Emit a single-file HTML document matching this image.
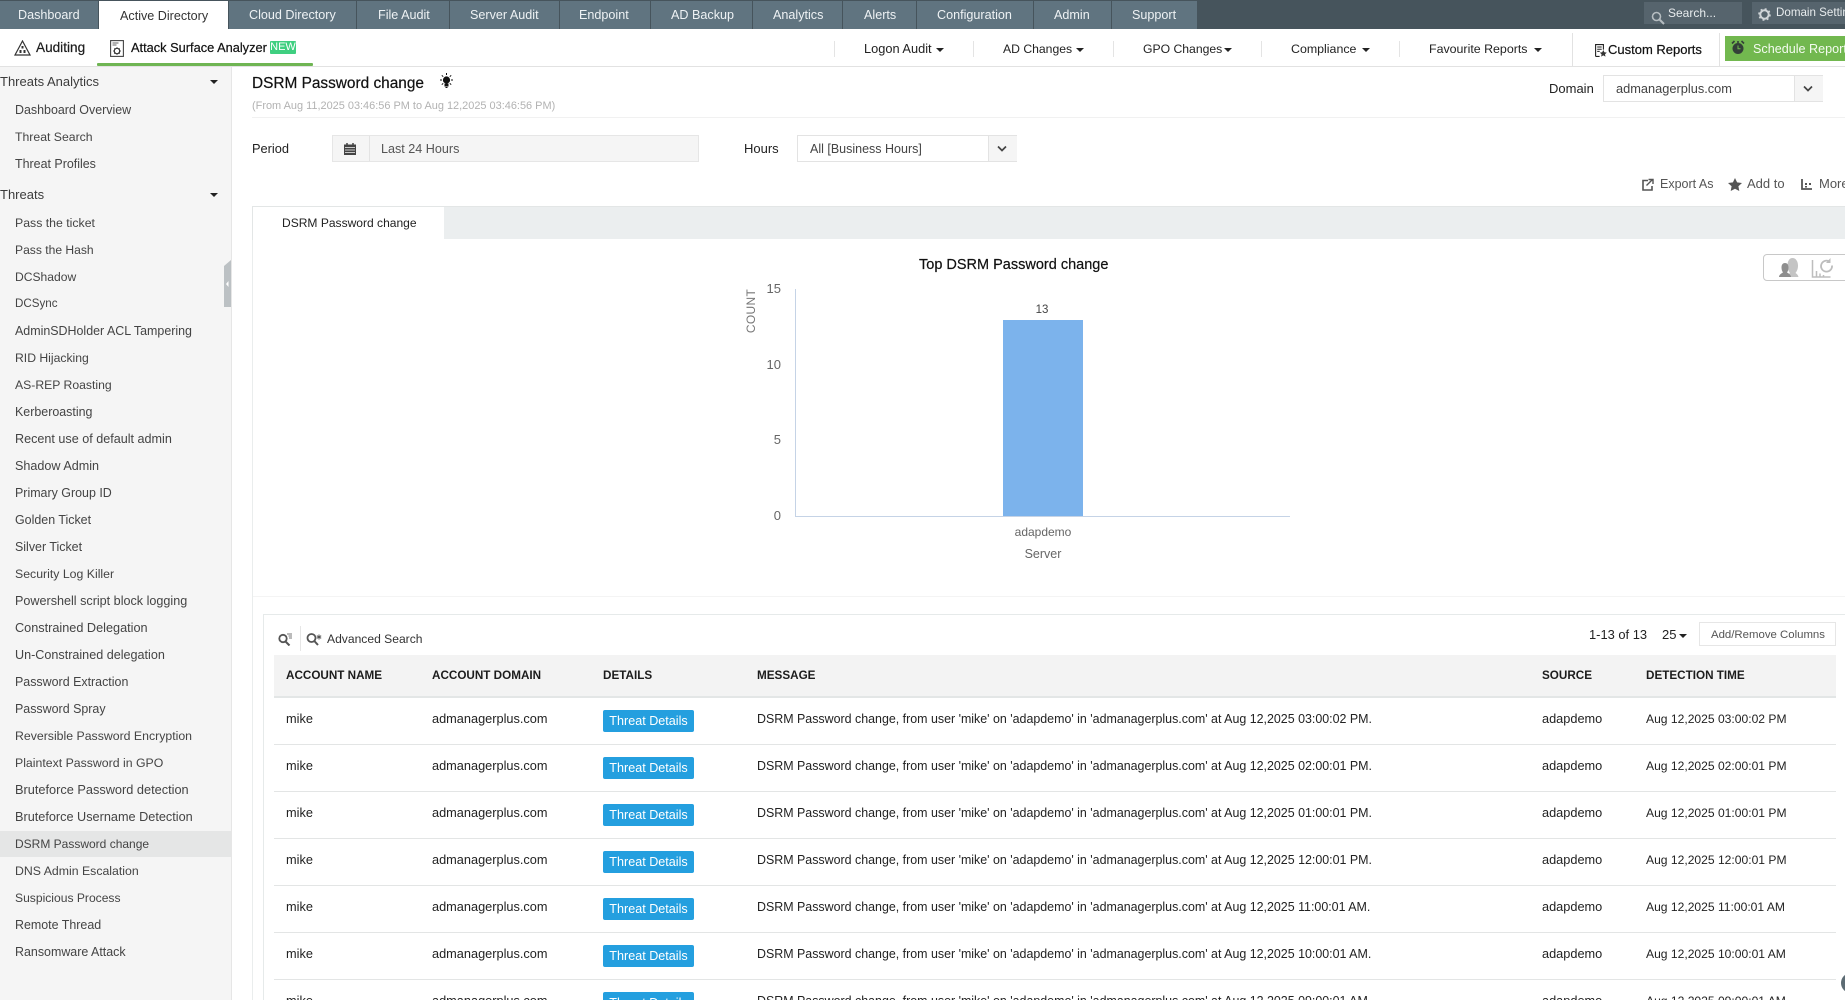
<!DOCTYPE html>
<html lang="en"><head><meta charset="utf-8"><title>DSRM Password change</title>
<style>
html{margin:0;padding:0;background:#fff;width:1845px;height:1000px;overflow:hidden}
body{margin:0;padding:0;background:#fff;width:1845px;height:1000px;overflow:hidden;position:relative;font-family:"Liberation Sans",sans-serif;font-size:12.5px;color:#333}
.a{position:absolute}
.t{position:absolute;white-space:nowrap;line-height:16px}
.tab{position:absolute;top:1px;height:28px;background:#607480;color:#eef2f4;line-height:29px;white-space:nowrap;font-size:12.6px;border-right:1px solid #46545c;box-sizing:content-box}
.sep{position:absolute;top:41px;height:16px;width:1px;background:#e4e4e4}
.arr{position:absolute;width:0;height:0;border-left:4px solid transparent;border-right:4px solid transparent;border-top:4px solid #222}
.si{position:absolute;left:15px;white-space:nowrap;line-height:16px;color:#444;font-size:12.45px}
.sh{position:absolute;left:0;white-space:nowrap;line-height:16px;color:#3c3c3c;font-size:13px}
.r{position:absolute;left:274px;width:1562px;height:47px;border-bottom:1px solid #e3e5e5;box-sizing:border-box}
.r span{position:absolute;top:13px;line-height:16px;white-space:nowrap;color:#222;font-size:12.75px}
.r span.m{font-size:12.43px}
.r span.d{font-size:12.1px}
.r b{position:absolute;left:329px;top:12px;width:91px;height:22px;background:#249fdf;border-radius:2px;color:#fff;font-weight:normal;font-size:12.6px;line-height:23px;text-align:center;white-space:nowrap}
.h{position:absolute;top:668px;line-height:16px;white-space:nowrap;color:#1c1c1c;font-size:11.7px;font-weight:bold}
</style></head>
<body>
<!-- top bar -->
<div class="a" style="left:0;top:0;width:1845px;height:29px;background:#46545c"></div>
<div class="tab" style="left:0;width:98px"><span class="a" style="left:18px;top:0">Dashboard</span></div>
<div class="a" style="left:99px;top:1px;width:129px;height:29px;background:#fff"><span class="t" style="left:21px;top:7px;color:#333;font-size:12.6px">Active Directory</span></div>
<div class="tab" style="left:229px;width:127px"><span class="a" style="left:20px;top:0">Cloud Directory</span></div>
<div class="tab" style="left:357px;width:92px"><span class="a" style="left:21px;top:0">File Audit</span></div>
<div class="tab" style="left:450px;width:109px"><span class="a" style="left:20px;top:0">Server Audit</span></div>
<div class="tab" style="left:560px;width:90px"><span class="a" style="left:19px;top:0">Endpoint</span></div>
<div class="tab" style="left:651px;width:101px"><span class="a" style="left:20px;top:0">AD Backup</span></div>
<div class="tab" style="left:753px;width:89px"><span class="a" style="left:20px;top:0">Analytics</span></div>
<div class="tab" style="left:843px;width:73px"><span class="a" style="left:21px;top:0">Alerts</span></div>
<div class="tab" style="left:917px;width:116px"><span class="a" style="left:20px;top:0">Configuration</span></div>
<div class="tab" style="left:1034px;width:77px"><span class="a" style="left:20px;top:0">Admin</span></div>
<div class="tab" style="left:1112px;width:85px;border-right:0"><span class="a" style="left:20px;top:0">Support</span></div>

<div class="a" style="left:1644px;top:2px;width:98px;height:22px;background:#56646d"></div>
<svg class="a" style="left:1651px;top:11px" width="14" height="14" viewBox="0 0 14 14"><circle cx="5.5" cy="5.5" r="4" fill="none" stroke="#b5bcc0" stroke-width="1.6"/><path d="M8.5 8.5L13 13" stroke="#b5bcc0" stroke-width="2"/></svg>
<span class="t" style="left:1668px;top:5px;color:#e8ecee;font-size:12px">Search...</span>
<div class="a" style="left:1752px;top:2px;width:93px;height:22px;background:#56646d"></div>
<svg class="a" style="left:1758px;top:8px" width="13" height="13" viewBox="0 0 13 13"><circle cx="6.5" cy="6.5" r="4.2" fill="none" stroke="#d0d5d8" stroke-width="2"/><circle cx="6.5" cy="6.5" r="5.6" fill="none" stroke="#d0d5d8" stroke-width="1.4" stroke-dasharray="2 2.4"/></svg>
<span class="t" style="left:1776px;top:5px;color:#e8ecee;font-size:11.6px">Domain Settings</span>

<!-- second row -->
<div class="a" style="left:0;top:66px;width:1845px;height:1px;background:#e2e2e2"></div>
<svg class="a" style="left:14px;top:40px" width="17" height="16" viewBox="0 0 17 16"><path d="M8.5 1L16 15H1Z" fill="none" stroke="#333" stroke-width="1.2"/><path d="M7.5 6h2v2.500h-2zM5.500 10h2v3h-2zM9.500 10h2v3h-2z" fill="#333"/></svg>
<span class="t" style="left:36px;top:40px;color:#1c1c1c;font-size:13.6px;-webkit-text-stroke:.2px #1c1c1c">Auditing</span>
<svg class="a" style="left:110px;top:40px" width="14" height="17" viewBox="0 0 14 17"><rect x=".6" y=".6" width="12.8" height="15.8" fill="none" stroke="#444" stroke-width="1.1"/><path d="M2.500 3h6M2.500 5h4" stroke="#666" stroke-width="1"/><circle cx="7" cy="11" r="2.700" fill="none" stroke="#333" stroke-width="1.2"/><path d="M7 7.200v1M7 13.800v1M3.200 11h1M9.800 11h1M4.400 8.400l.7.7M9 13l.7.7M9.600 8.400l-.7.7M5 13l-.7.7" stroke="#333"/></svg>
<span class="t" style="left:131px;top:40px;color:#111;font-size:12.8px;-webkit-text-stroke:.2px #111">Attack Surface Analyzer</span>
<span class="t" style="left:270px;top:41px;width:26px;height:13px;background:#3fcf80;color:#fff;font-size:11px;line-height:13px;text-align:center;border-radius:1px">NEW</span>
<div class="a" style="left:97px;top:63px;width:216px;height:3px;background:#6fb553;border-radius:1px"></div>

<div class="sep" style="left:834px"></div>
<span class="t" style="left:864px;top:41px;font-size:12.8px;color:#222">Logon Audit</span><div class="arr" style="left:936px;top:48px"></div>
<div class="sep" style="left:973px"></div>
<span class="t" style="left:1003px;top:41px;font-size:12.2px;color:#222">AD Changes</span><div class="arr" style="left:1076px;top:48px"></div>
<div class="sep" style="left:1113px"></div>
<span class="t" style="left:1143px;top:41px;font-size:12.2px;color:#222">GPO Changes</span><div class="arr" style="left:1224px;top:48px"></div>
<div class="sep" style="left:1261px"></div>
<span class="t" style="left:1291px;top:41px;font-size:12.4px;color:#222">Compliance</span><div class="arr" style="left:1362px;top:48px"></div>
<div class="sep" style="left:1399px"></div>
<span class="t" style="left:1429px;top:41px;font-size:12.4px;color:#222">Favourite Reports</span><div class="arr" style="left:1534px;top:48px"></div>
<div class="a" style="left:1572px;top:33px;width:1px;height:33px;background:#e2e2e2"></div>
<svg class="a" style="left:1595px;top:44px" width="12" height="13" viewBox="0 0 12 13"><path d="M.6 12.400V.6h7.800v5M.6 12.400h4" fill="none" stroke="#222" stroke-width="1.1"/><path d="M2.200 3h4.500M2.200 5.200h4.500M2.200 7.400h2.500" stroke="#222"/><path d="M8.300 6l1.100 2.300 2.400.3-1.800 1.600.5 2.400-2.200-1.200-2.200 1.200.5-2.400-1.800-1.600 2.400-.3z" fill="#333"/></svg>
<span class="t" style="left:1608px;top:42px;color:#111;font-size:13px;-webkit-text-stroke:.2px #111">Custom Reports</span>
<div class="a" style="left:1719px;top:33px;width:1px;height:33px;background:#e2e2e2"></div>
<div class="a" style="left:1725px;top:36px;width:120px;height:25px;background:#72b84f"></div>
<svg class="a" style="left:1731px;top:40px" width="14" height="15" viewBox="0 0 14 15"><circle cx="7" cy="8.500" r="5.500" fill="#333f38"/><path d="M7 5.500v3.200h2.500" stroke="#72b84f" stroke-width="1" fill="none"/><path d="M1 3.500L3.500 1M13 3.500L10.500 1M7 1v2" stroke="#333f38" stroke-width="1.6"/></svg>
<span class="t" style="left:1753px;top:40.5px;color:#f4fbf0;font-size:12.6px">Schedule Reports</span>

<!-- sidebar -->
<div class="a" style="left:0;top:67px;width:231px;height:933px;background:#f5f5f5;border-right:1px solid #e6e6e6"></div>
<span class="sh" style="top:74px">Threats Analytics</span><div class="arr" style="left:210px;top:80px;border-left-width:4.5px;border-right-width:4.5px"></div>
<span class="si" style="top:102px">Dashboard Overview</span>
<span class="si" style="top:129px;font-size:12.25px">Threat Search</span>
<span class="si" style="top:156px">Threat Profiles</span>
<span class="sh" style="top:187px">Threats</span><div class="arr" style="left:210px;top:193px;border-left-width:4.5px;border-right-width:4.5px"></div>
<span class="si" style="top:215px;font-size:12.3px">Pass the ticket</span>
<span class="si" style="top:242px;font-size:12.1px">Pass the Hash</span>
<span class="si" style="top:269px;font-size:12.1px">DCShadow</span>
<span class="si" style="top:296px;font-size:11.6px">DCSync</span>
<span class="si" style="top:323px">AdminSDHolder ACL Tampering</span>
<span class="si" style="top:350px;font-size:12.2px">RID Hijacking</span>
<span class="si" style="top:377px;font-size:12.2px">AS-REP Roasting</span>
<span class="si" style="top:404px">Kerberoasting</span>
<span class="si" style="top:431px;font-size:12.6px">Recent use of default admin</span>
<span class="si" style="top:458px;font-size:12.6px">Shadow Admin</span>
<span class="si" style="top:485px">Primary Group ID</span>
<span class="si" style="top:512px">Golden Ticket</span>
<span class="si" style="top:539px">Silver Ticket</span>
<span class="si" style="top:566px;font-size:12.3px">Security Log Killer</span>
<span class="si" style="top:593px;font-size:12.6px">Powershell script block logging</span>
<span class="si" style="top:620px;font-size:12.7px">Constrained Delegation</span>
<span class="si" style="top:647px;font-size:12.6px">Un-Constrained delegation</span>
<span class="si" style="top:674px">Password Extraction</span>
<span class="si" style="top:701px">Password Spray</span>
<span class="si" style="top:728px;font-size:12.3px">Reversible Password Encryption</span>
<span class="si" style="top:755px;font-size:12.3px">Plaintext Password in GPO</span>
<span class="si" style="top:782px;font-size:12.75px">Bruteforce Password detection</span>
<span class="si" style="top:809px;font-size:12.7px">Bruteforce Username Detection</span>
<div class="a" style="left:0;top:831px;width:231px;height:26px;background:#e5e6e6"></div>
<span class="si" style="top:836px;font-size:12px">DSRM Password change</span>
<span class="si" style="top:863px;font-size:12.3px">DNS Admin Escalation</span>
<span class="si" style="top:890px;font-size:12.1px">Suspicious Process</span>
<span class="si" style="top:917px">Remote Thread</span>
<span class="si" style="top:944px">Ransomware Attack</span>
<svg class="a" style="left:224px;top:260px" width="7" height="47" viewBox="0 0 7 47"><path d="M0 6L7 0V47H0Z" fill="#bcc1c4"/><path d="M4.500 21l-2.500 3 2.500 3z" fill="#fff"/></svg>

<!-- heading -->
<span class="t" style="left:252px;top:76px;font-size:15.4px;color:#111;-webkit-text-stroke:.2px #111">DSRM Password change</span>
<svg class="a" style="left:439px;top:73px" width="15" height="16" viewBox="0 0 15 16"><circle cx="7.500" cy="7" r="3.600" fill="#111"/><path d="M6 11h3v2H6zM7.500 0v2M1 7H3M12 7h2M2.800 2.300l1.400 1.400M12.200 2.300l-1.400 1.400M2.800 11.700l1.400-1.400M12.200 11.700l-1.400-1.400M6.500 14.500h2" stroke="#111" fill="#111"/></svg>
<span class="t" style="left:252px;top:97.500px;font-size:10.95px;color:#b2b2b2">(From Aug 11,2025 03:46:56 PM to Aug 12,2025 03:46:56 PM)</span>
<div class="a" style="left:252px;top:117px;width:1593px;height:1px;background:#f1f1f1"></div>

<span class="t" style="left:1549px;top:81px;color:#222;font-size:13px">Domain</span>
<div class="a" style="left:1603px;top:75px;width:220px;height:27px;border:1px solid #e3e3e3;box-sizing:border-box"></div>
<div class="a" style="left:1794px;top:76px;width:28px;height:25px;background:#f5f5f5;border-left:1px solid #e3e3e3"></div>
<span class="t" style="left:1616px;top:81px;color:#444;font-size:12.8px">admanagerplus.com</span>
<svg class="a" style="left:1802px;top:85px" width="12" height="8" viewBox="0 0 12 8"><path d="M2 1.500l4 4 4-4" fill="none" stroke="#444" stroke-width="1.7"/></svg>

<span class="t" style="left:252px;top:141px;color:#222;font-size:12.8px">Period</span>
<div class="a" style="left:332px;top:135px;width:367px;height:27px;background:#f5f5f5;border:1px solid #e6e6e6;box-sizing:border-box"></div>
<div class="a" style="left:369px;top:136px;width:1px;height:25px;background:#e3e3e3"></div>
<svg class="a" style="left:344px;top:143px" width="12" height="12" viewBox="0 0 12 12"><rect y="1.500" width="12" height="10.500" fill="#444"/><path d="M3 0v2M9 0v2" stroke="#444" stroke-width="1.5"/><path d="M1 4.500h10M1 7h10M1 9.500h10" stroke="#f5f5f5" stroke-width=".7"/></svg>
<span class="t" style="left:381px;top:141px;color:#555;font-size:12.6px">Last 24 Hours</span>
<span class="t" style="left:744px;top:141px;color:#222;font-size:13px">Hours</span>
<div class="a" style="left:797px;top:135px;width:220px;height:27px;border:1px solid #e3e3e3;box-sizing:border-box"></div>
<div class="a" style="left:988px;top:136px;width:28px;height:25px;background:#f5f5f5;border-left:1px solid #e3e3e3"></div>
<span class="t" style="left:810px;top:141px;color:#444;font-size:12.5px">All [Business Hours]</span>
<svg class="a" style="left:996px;top:145px" width="12" height="8" viewBox="0 0 12 8"><path d="M2 1.500l4 4 4-4" fill="none" stroke="#444" stroke-width="1.7"/></svg>

<svg class="a" style="left:1642px;top:178px" width="12" height="13" viewBox="0 0 12 13"><path d="M6 2.500H1v9.500h9V8" fill="none" stroke="#555" stroke-width="1.6"/><path d="M4.500 7.500L10 2M6.500 1.500h4.500v4.500" fill="none" stroke="#555" stroke-width="1.4"/></svg>
<span class="t" style="left:1660px;top:176px;color:#555;font-size:12.5px">Export As</span>
<svg class="a" style="left:1728px;top:178px" width="14" height="13" viewBox="0 0 14 13"><path d="M7 0l2.100 4.400 4.900.6-3.600 3.300.9 4.700L7 10.700 2.700 13l.9-4.700L0 5l4.900-.6z" fill="#555"/></svg>
<span class="t" style="left:1747px;top:176px;color:#555;font-size:13px">Add to</span>
<svg class="a" style="left:1801px;top:178px" width="12" height="12" viewBox="0 0 12 12"><path d="M1 1v10h10" fill="none" stroke="#555" stroke-width="1.800"/><path d="M4 5h2v2H4zM8 5h2v2H8zM4 8h2v1.500H4z" fill="#555"/></svg>
<span class="t" style="left:1819px;top:176px;color:#555;font-size:13px">More</span>

<!-- tabs strip -->
<div class="a" style="left:252px;top:206px;width:1593px;height:33px;background:#ebeeef;border-top:1px solid #e3e6e6;box-sizing:border-box"></div>
<div class="a" style="left:252px;top:206px;width:192px;height:34px;background:#fff;border-top:1px solid #e3e6e6;border-left:1px solid #e3e6e6;box-sizing:border-box"></div>
<span class="t" style="left:282px;top:215px;color:#222;font-size:12.05px">DSRM Password change</span>
<div class="a" style="left:252px;top:240px;width:1px;height:760px;background:#eaeded"></div>

<!-- chart -->
<span class="t" style="left:919px;top:256.500px;font-size:14.5px;color:#111;-webkit-text-stroke:.2px #111">Top DSRM Password change</span>
<div class="a" style="left:795px;top:289px;width:1px;height:227px;background:#c5d3e6"></div>
<div class="a" style="left:795px;top:516px;width:495px;height:1px;background:#c5d3e6"></div>
<div class="a" style="left:1003px;top:320px;width:80px;height:196px;background:#7cb3ec"></div>
<span class="t" style="left:740px;width:41px;top:281px;text-align:right;color:#666;font-size:13px">15</span>
<span class="t" style="left:740px;width:41px;top:357px;text-align:right;color:#666;font-size:13px">10</span>
<span class="t" style="left:740px;width:41px;top:432px;text-align:right;color:#666;font-size:13px">5</span>
<span class="t" style="left:740px;width:41px;top:508px;text-align:right;color:#666;font-size:13px">0</span>
<span class="t" style="left:727px;top:303px;width:48px;text-align:center;transform:rotate(-90deg);font-size:12px;color:#777;letter-spacing:.3px">COUNT</span>
<span class="t" style="left:1002px;top:302px;width:80px;text-align:center;font-size:11.5px;color:#444">13</span>
<span class="t" style="left:1003px;top:524px;width:80px;text-align:center;font-size:12px;color:#666">adapdemo</span>
<span class="t" style="left:1003px;top:546px;width:80px;text-align:center;font-size:12.5px;color:#666">Server</span>
<div class="a" style="left:1763px;top:254px;width:90px;height:27px;border:1px solid #c8c8c8;border-radius:4px;box-sizing:border-box"></div>
<svg class="a" style="left:1778px;top:256px" width="58" height="24" viewBox="0 0 58 24"><path d="M8 21c1-2 3-3 4-4-1.500-2-2.500-4-2.500-7.500C9.500 5 11.500 2 14.500 2s5.500 3 5.500 7.500c0 3.500-1 5.500-2.500 7.500 1.500 1 2.500 2 3 4z" fill="#c4c4c4"/><path d="M1 21c0-2 2-3.500 4-4.500-1-1.500-1.500-3-1.500-5C3.500 8.500 5 7 7 7s3.500 1.500 3.500 4.500c0 2-.5 3.500-1.500 5 2 1 4 2.500 4 4.500z" fill="#8e8e8e"/><path d="M34.500 4v17h18M38.500 21v-6M42 21v-3.500M45.500 21v-2" fill="none" stroke="#bdbdbd" stroke-width="1.5"/><path d="M54 9.500a5.500 5.500 0 1 1-2.500-4" fill="none" stroke="#bdbdbd" stroke-width="1.8"/><path d="M52.500 2v5H48z" fill="#bdbdbd"/></svg>
<div class="a" style="left:253px;top:596px;width:1592px;height:1px;background:#f4f4f4"></div>

<!-- table block -->
<div class="a" style="left:263px;top:614px;width:1582px;height:1px;background:#e6eaea"></div>
<div class="a" style="left:263px;top:614px;width:1px;height:386px;background:#e6eaea"></div>
<svg class="a" style="left:278px;top:633px" width="14" height="13" viewBox="0 0 14 13"><circle cx="5" cy="5.500" r="3.700" fill="none" stroke="#555" stroke-width="1.8"/><path d="M7.500 8.500L11.500 12.500" stroke="#555" stroke-width="2"/><path d="M9 1h5M10.500 3h3.500M11 5h3" stroke="#777"/></svg>
<div class="a" style="left:300px;top:626px;width:1px;height:25px;background:#e6e6e6"></div>
<svg class="a" style="left:306px;top:632px" width="16" height="14" viewBox="0 0 16 14"><circle cx="5.500" cy="6" r="4" fill="none" stroke="#555" stroke-width="1.8"/><path d="M8.300 9L12 13" stroke="#555" stroke-width="2"/><path d="M13 2.500v5M10.800 3.700l4.400 2.600M15.200 3.700l-4.400 2.600" stroke="#555"/></svg>
<span class="t" style="left:327px;top:631px;color:#333;font-size:12.1px">Advanced Search</span>
<span class="t" style="left:1589px;top:627px;color:#222;font-size:12.9px">1-13 of 13</span>
<span class="t" style="left:1662px;top:627px;color:#222;font-size:13px">25</span><div class="arr" style="left:1679px;top:634px"></div>
<div class="a" style="left:1699px;top:622px;width:137px;height:24px;border:1.5px solid #e6e6e6;box-sizing:border-box"></div>
<span class="t" style="left:1711px;top:627px;font-size:11.4px;color:#555">Add/Remove Columns</span>

<div class="a" style="left:274px;top:655px;width:1562px;height:43px;background:#f3f3f3;border-bottom:2px solid #e3e6e6;box-sizing:border-box"></div>
<span class="h" style="left:286px">ACCOUNT NAME</span>
<span class="h" style="left:432px">ACCOUNT DOMAIN</span>
<span class="h" style="left:603px">DETAILS</span>
<span class="h" style="left:757px">MESSAGE</span>
<span class="h" style="left:1542px">SOURCE</span>
<span class="h" style="left:1646px">DETECTION TIME</span>

<div class="r" style="top:698px"><span style="left:12px">mike</span><span style="left:158px">admanagerplus.com</span><b>Threat Details</b><span class="m" style="left:483px">DSRM Password change, from user 'mike' on 'adapdemo' in 'admanagerplus.com' at Aug 12,2025 03:00:02 PM.</span><span style="left:1268px">adapdemo</span><span class="d" style="left:1372px">Aug 12,2025 03:00:02 PM</span></div>
<div class="r" style="top:745px"><span style="left:12px">mike</span><span style="left:158px">admanagerplus.com</span><b>Threat Details</b><span class="m" style="left:483px">DSRM Password change, from user 'mike' on 'adapdemo' in 'admanagerplus.com' at Aug 12,2025 02:00:01 PM.</span><span style="left:1268px">adapdemo</span><span class="d" style="left:1372px">Aug 12,2025 02:00:01 PM</span></div>
<div class="r" style="top:792px"><span style="left:12px">mike</span><span style="left:158px">admanagerplus.com</span><b>Threat Details</b><span class="m" style="left:483px">DSRM Password change, from user 'mike' on 'adapdemo' in 'admanagerplus.com' at Aug 12,2025 01:00:01 PM.</span><span style="left:1268px">adapdemo</span><span class="d" style="left:1372px">Aug 12,2025 01:00:01 PM</span></div>
<div class="r" style="top:839px"><span style="left:12px">mike</span><span style="left:158px">admanagerplus.com</span><b>Threat Details</b><span class="m" style="left:483px">DSRM Password change, from user 'mike' on 'adapdemo' in 'admanagerplus.com' at Aug 12,2025 12:00:01 PM.</span><span style="left:1268px">adapdemo</span><span class="d" style="left:1372px">Aug 12,2025 12:00:01 PM</span></div>
<div class="r" style="top:886px"><span style="left:12px">mike</span><span style="left:158px">admanagerplus.com</span><b>Threat Details</b><span class="m" style="left:483px">DSRM Password change, from user 'mike' on 'adapdemo' in 'admanagerplus.com' at Aug 12,2025 11:00:01 AM.</span><span style="left:1268px">adapdemo</span><span class="d" style="left:1372px">Aug 12,2025 11:00:01 AM</span></div>
<div class="r" style="top:933px"><span style="left:12px">mike</span><span style="left:158px">admanagerplus.com</span><b>Threat Details</b><span class="m" style="left:483px">DSRM Password change, from user 'mike' on 'adapdemo' in 'admanagerplus.com' at Aug 12,2025 10:00:01 AM.</span><span style="left:1268px">adapdemo</span><span class="d" style="left:1372px">Aug 12,2025 10:00:01 AM</span></div>
<div class="r" style="top:980px"><span style="left:12px">mike</span><span style="left:158px">admanagerplus.com</span><b>Threat Details</b><span class="m" style="left:483px">DSRM Password change, from user 'mike' on 'adapdemo' in 'admanagerplus.com' at Aug 12,2025 09:00:01 AM.</span><span style="left:1268px">adapdemo</span><span class="d" style="left:1372px">Aug 12,2025 09:00:01 AM</span></div>
<div class="a" style="left:1841px;top:973px;width:20px;height:20px;border-radius:50%;background:#5c6b73"></div>
</body></html>
